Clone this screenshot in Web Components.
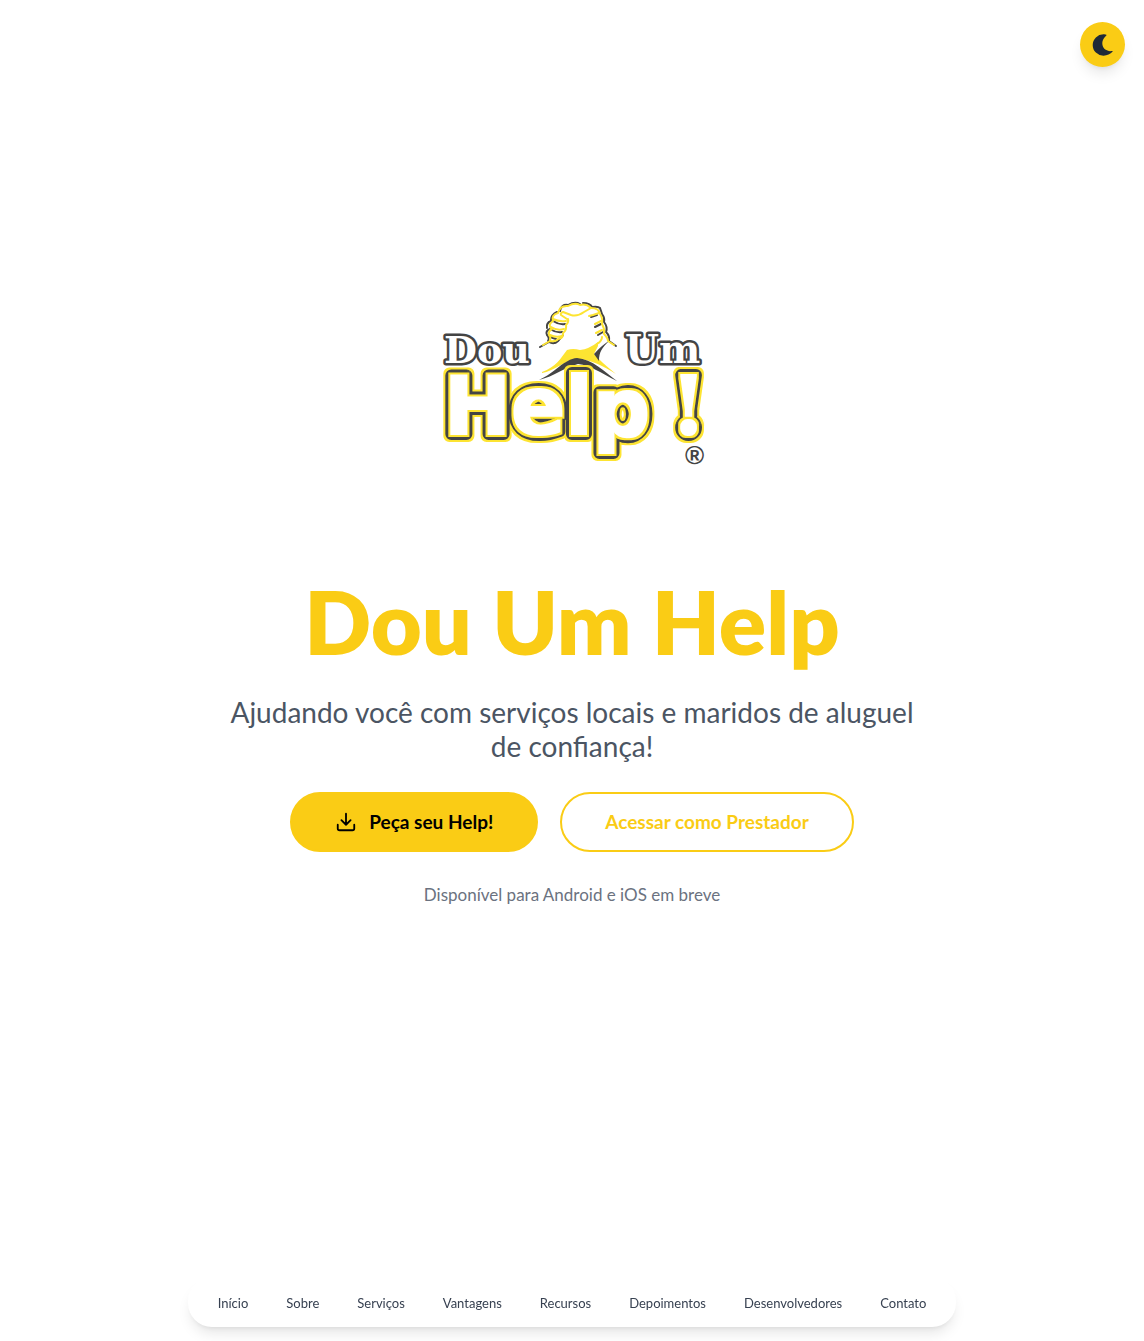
<!DOCTYPE html>
<html lang="pt-BR">
<head>
<meta charset="utf-8">
<meta name="viewport" content="width=device-width, initial-scale=1">
<title>Dou Um Help</title>
<style>
  body { margin: 0; background: #fff; font-family: Lato, "Open Sans", sans-serif; color: #4b5563; }
</style>
</head>
<body>
<help-page></help-page>
<script>
const define = (name, html, setup) => {
  const template = document.createElement('template');
  template.innerHTML = html;
  customElements.define(name, class extends HTMLElement {
    constructor() {
      super();
      this.attachShadow({ mode: 'open' }).append(template.content.cloneNode(true));
      if (setup) setup(this);
    }
  });
};

define('brand-logo', `
<style>
  :host { display: block; width: 276px; max-width: 100%; }
  svg { display: block; width: 100%; height: auto; overflow: visible; }
  text { font-family: "DejaVu Sans", sans-serif; font-weight: 700; fill: #fff; stroke: #444; stroke-linejoin: round; paint-order: stroke; }
  .small { font-family: "DejaVu Serif", serif; stroke-width: 5; }
  .big { stroke-width: 12; filter: url(#outline); }
  .bang { font-family: "DejaVu Serif", serif; }
  .mark { font-family: "Liberation Sans", sans-serif; fill: #444; stroke: none; }
</style>
<svg viewBox="434 298 276 172" role="img" aria-label="Dou Um Help!">
  <defs>
    <filter id="outline" x="-10%" y="-10%" width="120%" height="120%" color-interpolation-filters="sRGB">
      <feMorphology in="SourceAlpha" operator="dilate" radius="2" result="wide"/>
      <feFlood flood-color="#fde432"/>
      <feComposite in2="wide" operator="in" result="outer"/>
      <feColorMatrix in="SourceGraphic" values="0 0 0 0 1  0 0 0 0 1  0 0 0 0 1  1.4 0 0 0 -.4" result="face"/>
      <feMorphology in="face" operator="dilate" radius="3" result="faceWide"/>
      <feMorphology in="face" operator="dilate" radius="1" result="faceFat"/>
      <feFlood flood-color="#fde432"/>
      <feComposite in2="faceWide" operator="in" result="inner"/>
      <feMerge><feMergeNode in="outer"/><feMergeNode in="SourceGraphic"/><feMergeNode in="inner"/><feMergeNode in="faceFat"/></feMerge>
    </filter>
  </defs>
  <text class="small" x="444" y="363" font-size="38">Dou</text>
  <text class="small" x="625" y="363" font-size="39">Um</text>
  <path fill="#fde432" d="M542 372C556 367 561 358 567 350Q573 348 580 350Q589 349 598 342L598 346L594 354Q600 361 616 374C603 366 590 359 577 359C564 361 554 371 542 373Z"/>
  <path fill="#444" d="M539 380C555 373 564 359 577 358C592 359 605 372 617 381C600 373 591 365 578 364C563 368 555 376 539 380ZM594 354C599 349 601 346 609 341C602 348 599 352 599 361Z"/>
  <g fill="none" stroke-linecap="round" stroke-linejoin="round">
    <g stroke="#444" stroke-width="2">
      <path d="M540 347L549 342Q554 345 558 341L563 335M548 341Q550 338 547 335Q545 331 550 329M547 328Q546 323 551 321M551 320Q551 315 557 312M560 311Q561 304 568 305Q575 301 580 304"/>
      <path d="M583 303Q590 303 592 307Q598 306 600 308L602 314Q605 318 604 322Q608 327 606 332Q610 336 609 341L616 346"/>
      <path d="M553 321Q559 325 565 324M550 329Q556 333 562 332M550 337L556 339M591 317L597 315M595 327L601 324M598 335L603 332"/>
    </g>
    <g stroke="#fde432" stroke-width="2">
      <path d="M543 345L550 341Q556 342 558 339Q564 338 563 333Q567 330 566 325Q569 322 568 319"/>
      <path d="M550 340Q551 337 549 335Q548 331 552 329Q547 325 553 321Q551 315 558 313Q560 305 568 306Q575 302 580 305Q586 303 591 308L584 312Q577 317 571 315L563 312Q560 313 561 315L567 319"/>
      <path d="M553 319Q559 322 566 321M551 327Q557 331 564 329M550 335Q556 338 562 336M591 308Q599 308 600 314Q603 318 602 324Q605 329 604 334Q608 338 608 341L614 345"/>
      <path d="M593 315L599 313M595 324L601 321M596 333L602 330M589 316L593 315M602 337Q602 341 597 344"/>
    </g>
  </g>
  <text class="big" x="444" y="434" font-size="80">Hel<tspan y="436">p</tspan></text>
  <text class="big bang" x="671" y="434" font-size="80">!</text>
  <text class="mark" x="685" y="464" font-size="26">®</text>
</svg>`);

define('theme-toggle', `
<style>
  :host { display: block; position: fixed; top: 22px; right: 19px; z-index: 2; }
  button { display: grid; place-items: center; width: 45px; height: 45px; padding: 0; border: 0; border-radius: 50%; background: #facc15; color: #1f2937; box-shadow: 0 9px 14px -3px #0000001a, 0 4px 6px -4px #0000001a; cursor: pointer; }
  svg { width: 22px; height: 22px; }
</style>
<button type="button" aria-label="Alternar tema">
  <svg viewBox="0 0 22 22" aria-hidden="true"><path fill="currentColor" d="M14.4.8Q13.5.2 11.5.3A10.7 10.7 0 0 0 .7 11 10.7 10.7 0 0 0 11.5 21.7Q17 21.7 20.7 17.6 21 16.8 20 17C11 18.5 6.5 8 14.4 1.6Z"/></svg>
</button>`);

define('pill-button', `
<style>
  :host { display: block; }
  button { display: flex; align-items: center; justify-content: center; gap: 12px; box-sizing: border-box; width: 100%; min-height: 60px; padding: 0 43px; border: 2px solid #facc15; border-radius: 30px; background: #facc15; color: #000; font: 700 19px/28px Lato, sans-serif; cursor: pointer; }
  :host([outline]) button { background: transparent; color: #facc15; }
</style>
<button type="button"><slot name="icon"></slot><span><slot></slot></span></button>`);

define('nav-bar', `
<style>
  :host { display: flex; justify-content: center; position: fixed; left: 0; right: 0; bottom: 14px; z-index: 1; }
  nav { display: flex; flex-wrap: wrap; gap: 38px; padding: 16px 30px 14px; border-radius: 24px; background: #fff; box-shadow: 0 9px 14px -3px #0000001a, 0 4px 6px -4px #0000001a; }
  a { color: #374151; font-size: 13px; line-height: 19px; text-decoration: none; }
</style>
<nav></nav>`, host => {
  const nav = host.shadowRoot.querySelector('nav');
  for (const label of ['Início', 'Sobre', 'Serviços', 'Vantagens', 'Recursos', 'Depoimentos', 'Desenvolvedores', 'Contato']) {
    const link = document.createElement('a');
    link.href = '#' + label.toLowerCase();
    link.textContent = label;
    nav.append(link);
  }
});

define('help-page', `
<style>
  :host { display: block; }
  main { display: flex; flex-direction: column; align-items: center; justify-content: center; box-sizing: border-box; min-height: 100vh; padding: 20px 24px 156px; text-align: center; }
  h1 { margin: 106px 0 0; color: #facc15; font-size: 88px; font-weight: 800; line-height: 90px; }
  .lead { max-width: 720px; margin: 29px 0 0; font-size: 28px; line-height: 34px; }
  .actions { display: flex; flex-wrap: wrap; justify-content: center; gap: 22px; margin-top: 29px; }
  .note { margin: 30px 0 0; color: #6b7280; font-size: 17px; line-height: 26px; }
  .actions svg { display: block; width: 22px; height: 22px; }
</style>
<theme-toggle></theme-toggle>
<main>
  <brand-logo></brand-logo>
  <h1>Dou Um Help</h1>
  <p class="lead">Ajudando você com serviços locais e maridos de aluguel de confiança!</p>
  <div class="actions">
    <pill-button><svg slot="icon" viewBox="0 0 24 24" fill="none" stroke="currentColor" stroke-width="2" stroke-linecap="round" stroke-linejoin="round" aria-hidden="true"><path d="M3 15v4a2 2 0 0 0 2 2h14a2 2 0 0 0 2-2v-4M7 10l5 5 5-5M12 15V3"/></svg>Peça seu Help!</pill-button>
    <pill-button outline>Acessar como Prestador</pill-button>
  </div>
  <p class="note">Disponível para Android e iOS em breve</p>
</main>
<nav-bar></nav-bar>`);
</script>
</body>
</html>
